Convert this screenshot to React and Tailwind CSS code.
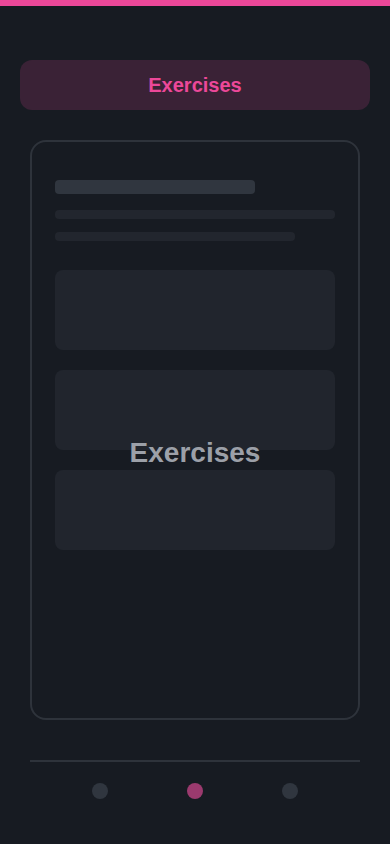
import React from 'react';

const font = { fontFamily: '"Liberation Sans", Arial, sans-serif' };

function Skeleton() {
  return (
    <div className="flex flex-col px-[23px] pt-[38px]">
      <div className="h-[14px] w-[200px] rounded bg-[#30363f]" />
      <div className="mt-4 h-[9px] w-[280px] rounded bg-[#22262e]" />
      <div className="mt-[13px] h-[9px] w-[240px] rounded bg-[#22262e]" />
      <div className="mt-[29px] flex flex-col gap-5">
        <div className="h-20 rounded-lg bg-[#21252d]" />
        <div className="h-20 rounded-lg bg-[#21252d]" />
        <div className="h-20 rounded-lg bg-[#21252d]" />
      </div>
    </div>
  );
}

export default function App() {
  return (
    <div className="min-h-screen w-full bg-[#171b22] flex flex-col" style={font}>
      <div className="h-1.5 w-full bg-[#ec4899]" />

      <div className="px-5 pt-[54px]">
        <div className="h-[50px] rounded-xl bg-[#3a2236] flex items-center justify-center">
          <span className="text-[20px] font-bold text-[#ec4899]">Exercises</span>
        </div>
      </div>

      <div className="px-[30px] pt-[30px]">
        <div className="relative h-[580px] rounded-2xl border-2 border-[#2e333b]">
          <Skeleton />
          <div className="absolute left-0 right-0 top-[291px] flex justify-center">
            <span className="text-[28px] leading-[40px] font-bold text-[#9ca0a8]">Exercises</span>
          </div>
        </div>
      </div>

      <div className="mx-[30px] mt-10 h-[2px] bg-[#2e333b]" />

      <div className="flex justify-center gap-[79px] pt-[21px]">
        <div className="h-4 w-4 rounded-full bg-[#30363f]" />
        <div className="h-4 w-4 rounded-full bg-[#9b3a6e]" />
        <div className="h-4 w-4 rounded-full bg-[#30363f]" />
      </div>
    </div>
  );
}
